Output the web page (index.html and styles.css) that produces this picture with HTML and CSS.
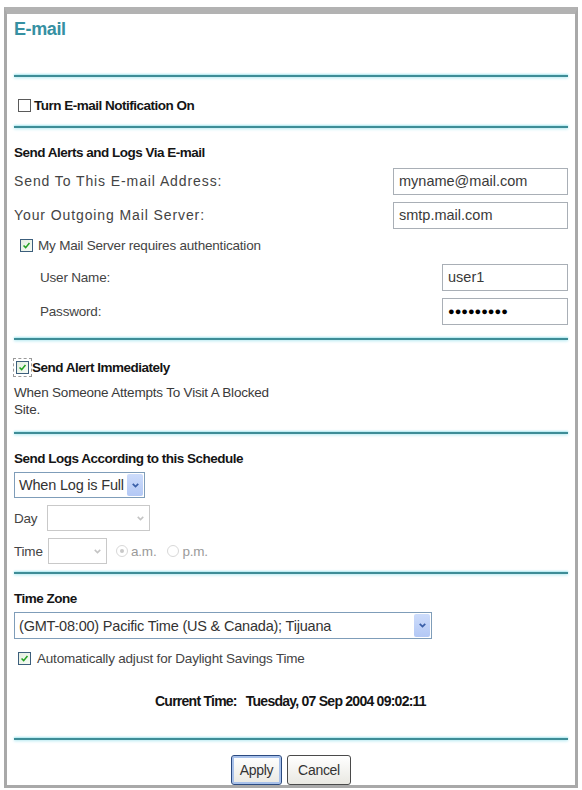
FILE: index.html
```html
<!DOCTYPE html>
<html lang="en">
<head>
    <meta charset="UTF-8">
    <meta name="viewport" content="width=device-width, initial-scale=1.0">
    <title>E-mail</title>
    <link rel="stylesheet" href="styles.css">
</head>
<body>

    <div class="panel">
        <div class="title">E-mail</div>
        <div class="rule"></div>

        <div class="section sec-notify">
            <div class="row row-check">
                <span class="cb"></span>
                <span class="bold">Turn E-mail Notification On</span>
            </div>
        </div>
        <div class="rule"></div>

        <div class="section sec-send">
            <div class="row heading bold">Send Alerts and Logs Via E-mail</div>
            <div class="row row-field">
                <span class="label big">Send To This E-mail Address:</span>
                <div class="field wide">myname@mail.com</div>
            </div>
            <div class="row row-field">
                <span class="label big">Your Outgoing Mail Server:</span>
                <div class="field wide">smtp.mail.com</div>
            </div>
            <div class="row row-auth">
                <span class="cb checked"><svg viewBox="0 0 13 13"><path d="M3 6.5 L5.5 9 L10 3.5" fill="none" stroke="#21a121" stroke-width="1.8"/></svg></span>
                <span class="label">My Mail Server requires authentication</span>
            </div>
            <div class="row row-field row-sub">
                <span class="label">User Name:</span>
                <div class="field short">user1</div>
            </div>
            <div class="row row-field row-sub">
                <span class="label">Password:</span>
                <div class="field short dots">&#9679;&#9679;&#9679;&#9679;&#9679;&#9679;&#9679;&#9679;&#9679;</div>
            </div>
        </div>
        <div class="rule"></div>

        <div class="section sec-alert">
            <div class="row row-alert">
                <span class="focus"><span class="cb checked"><svg viewBox="0 0 13 13"><path d="M3 6.5 L5.5 9 L10 3.5" fill="none" stroke="#21a121" stroke-width="1.8"/></svg></span></span>
                <span class="bold">Send Alert Immediately</span>
            </div>
            <div class="note">When Someone Attempts To Visit A Blocked<br>Site.</div>
        </div>
        <div class="rule"></div>

        <div class="section sec-logs">
            <div class="row heading bold">Send Logs According to this Schedule</div>
            <div class="row row-sel first">
                <div class="select sel-log"><span class="sel-text">When Log is Full</span><span class="arrow"><svg viewBox="0 0 10 10"><path d="M2.5 3.5 L5 6 L7.5 3.5" fill="none" stroke="#3a5fa8" stroke-width="1.6"/></svg></span></div>
            </div>
            <div class="row row-sel">
                <span class="label lbl-day">Day</span>
                <div class="select disabled sel-day"><span class="sel-text"></span><span class="arrow"><svg viewBox="0 0 10 10"><path d="M2.5 3.5 L5 6 L7.5 3.5" fill="none" stroke="#c4c4c4" stroke-width="1.4"/></svg></span></div>
            </div>
            <div class="row row-sel">
                <span class="label lbl-time">Time</span>
                <div class="select disabled sel-time"><span class="sel-text"></span><span class="arrow"><svg viewBox="0 0 10 10"><path d="M2.5 3.5 L5 6 L7.5 3.5" fill="none" stroke="#c4c4c4" stroke-width="1.4"/></svg></span></div>
                <span class="radio on"></span><span class="label faint">a.m.</span>
                <span class="radio"></span><span class="label faint">p.m.</span>
            </div>
        </div>
        <div class="rule"></div>

        <div class="section sec-zone">
            <div class="row heading bold">Time Zone</div>
            <div class="row row-zone">
                <div class="select sel-zone"><span class="sel-text">(GMT-08:00) Pacific Time (US &amp; Canada); Tijuana</span><span class="arrow"><svg viewBox="0 0 10 10"><path d="M2.5 3.5 L5 6 L7.5 3.5" fill="none" stroke="#3a5fa8" stroke-width="1.6"/></svg></span></div>
            </div>
            <div class="row row-auto">
                <span class="cb checked"><svg viewBox="0 0 13 13"><path d="M3 6.5 L5.5 9 L10 3.5" fill="none" stroke="#21a121" stroke-width="1.8"/></svg></span>
                <span class="label">Automatically adjust for Daylight Savings Time</span>
            </div>
            <div class="row row-now bold">
                <span>Current Time:</span><span>Tuesday, 07 Sep 2004 09:02:11</span>
            </div>
        </div>
        <div class="rule"></div>

        <div class="section sec-buttons">
            <button class="btn btn-apply">Apply</button>
            <button class="btn">Cancel</button>
        </div>
    </div>

</body>
</html>
```

FILE: styles.css
```css
body, html { margin: 0; padding: 0; background: #fff; font-family: 'Liberation Sans', Arial, sans-serif; color: #3c3c3c; }
.panel { margin: 7px 4px 0 4px; height: 771px; border: 3px solid #a9a9a9; border-top: 7px solid #b2b2b2; padding: 0 7px; background: #fff; }
.title { height: 58px; padding-top: 3px; line-height: 24px; font-size: 18px; font-weight: bold; color: #3690a2; letter-spacing: -0.4px; }
.rule { height: 2px; background: #3e8d97; box-shadow: 0 -1px 2px #a8e6ee, 0 1px 3px #a8e6ee; }
.section { display: flex; flex-direction: column; }
.row { display: flex; align-items: center; font-size: 13.5px; }
.bold { font-weight: bold; color: #151515; letter-spacing: -0.5px; }
.label { letter-spacing: -0.2px; color: #444; }
.label.big { font-size: 14px; letter-spacing: 0.9px; }
.faint { color: #9a9a9a; }

.sec-notify { padding: 16px 0 9px; }
.row-check { height: 24px; gap: 3px; padding-left: 4px; }

.sec-send { padding: 14px 0 10px; }
.heading { height: 20px; }
.row-field { height: 34px; justify-content: space-between; }
.sec-send .heading + .row-field { margin-top: 2px; }
.row-auth { height: 26px; gap: 5px; padding-left: 6px; }
.row-sub { padding-left: 26px; }
.row-auth + .row-sub { margin-top: 2px; }
.field { height: 25px; border: 1px solid #a9afb6; padding-left: 5px; display: flex; align-items: center; font-size: 14.5px; color: #3a3a3a; box-sizing: border-box; }
.wide { width: 175px; height: 27px; }
.short { width: 126px; height: 27px; }
.dots { font-size: 11px; letter-spacing: 0; color: #000; }

.cb { width: 13px; height: 13px; border: 1px solid #5a5a5a; background: #fff; box-sizing: border-box; display: inline-flex; }
.cb.checked { border-color: #3c5e7c; background: linear-gradient(135deg, #e4eee0, #f6fbf4); }
.cb svg { width: 11px; height: 11px; }

.sec-alert { padding: 17px 0 14px; }
.row-alert { height: 20px; }
.focus { display: inline-flex; padding: 2px; border: 1px dashed #9a9a9a; margin-left: -1px; }
.note { margin-top: 7px; font-size: 13.5px; line-height: 17px; letter-spacing: -0.2px; color: #3a3a3a; }

.sec-logs { padding: 14px 0 8px; }
.row-sel { height: 26px; margin-top: 7px; }
.row-sel.first { margin-top: 4px; }
.select { display: flex; align-items: stretch; height: 26px; border: 1px solid #7f9db9; box-sizing: border-box; background: #fff; }
.sel-text { flex: 1; display: flex; align-items: center; padding-left: 4px; font-size: 14.5px; color: #333; white-space: nowrap; letter-spacing: -0.2px; }
.arrow { width: 16px; margin: 1px; display: flex; align-items: center; justify-content: center; background: linear-gradient(#cddcfb, #b3c8f5); border-radius: 2px; }
.arrow svg { width: 11px; height: 11px; }
.select.disabled { border-color: #c9c9c9; }
.select.disabled .arrow { background: #fff; }
.sel-log { width: 131px; }
.sel-day { width: 103px; }
.sel-time { width: 59px; }
.lbl-day { width: 33px; }
.lbl-time { width: 34px; }
.radio { width: 10px; height: 10px; border-radius: 50%; border: 1px solid #d8d8d8; margin: 0 3px 0 9px; position: relative; }
.radio.on::after { content: ""; position: absolute; left: 3px; top: 3px; width: 4px; height: 4px; border-radius: 50%; background: #c8c8c8; }
.radio + .label + .radio { margin-left: 11px; }

.sec-zone { padding: 14px 0 27px; }
.row-zone { margin-top: 4px; }
.sel-zone { width: 418px; height: 27px; }
.row-auto { height: 24px; margin-top: 7px; gap: 6px; padding-left: 4px; }
.row-now { height: 20px; margin-top: 21px; padding-left: 141px; gap: 9px; font-size: 14px; letter-spacing: -0.75px; }

.sec-buttons { flex-direction: row; justify-content: center; gap: 5px; padding: 15px 0 0 0; }
.btn { height: 30px; padding: 0 7px; font-family: 'Liberation Sans', Arial, sans-serif; font-size: 14px; color: #333; background: linear-gradient(#ffffff, #e9e8e2); border: 1px solid #4a4a4a; border-radius: 3px; letter-spacing: -0.3px; }
.btn-apply { width: 51px; box-shadow: inset 0 0 0 2px #a8c1ea; border-color: #2b4a80; }
.btn + .btn { width: 64px; }
```
